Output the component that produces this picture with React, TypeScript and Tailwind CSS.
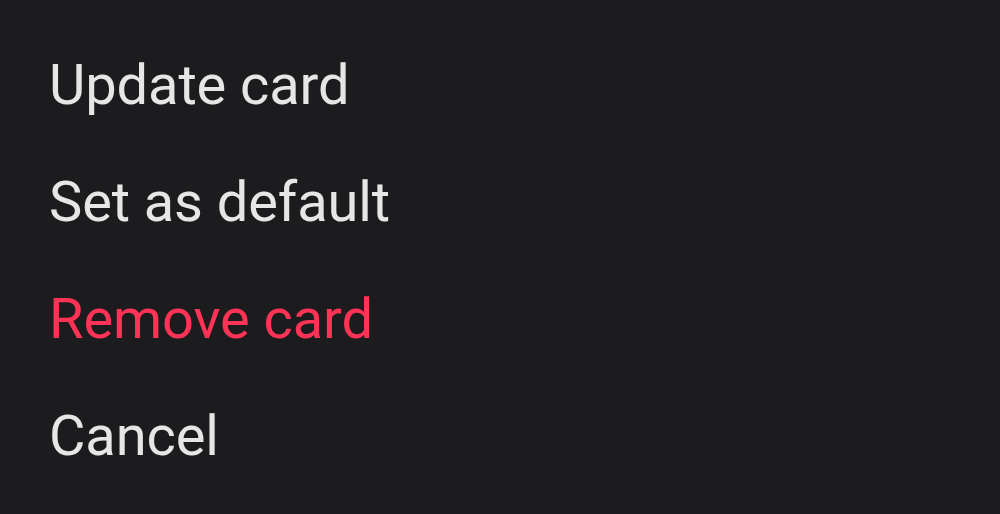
import React from 'react';

const items = [
  { label: 'Update card', danger: false },
  { label: 'Set as default', danger: false },
  { label: 'Remove card', danger: true },
  { label: 'Cancel', danger: false },
];

export default function App() {
  return (
    <div className="w-[1000px] h-[514px] bg-[#1c1c1e] pt-[27px] overflow-hidden" style={{ fontFamily: 'Roboto, "Noto Sans", sans-serif' }}>
      <ul className="flex flex-col">
        {items.map(item => (
          <li key={item.label}>
            <button
              className={`w-full text-left pl-[49px] h-[117px] leading-[117px] text-[56px] tracking-[-0.1px] ${item.danger ? 'text-[#ff3355]' : 'text-[#e6e6e6]'}`}
            >
              {item.label}
            </button>
          </li>
        ))}
      </ul>
    </div>
  );
}
